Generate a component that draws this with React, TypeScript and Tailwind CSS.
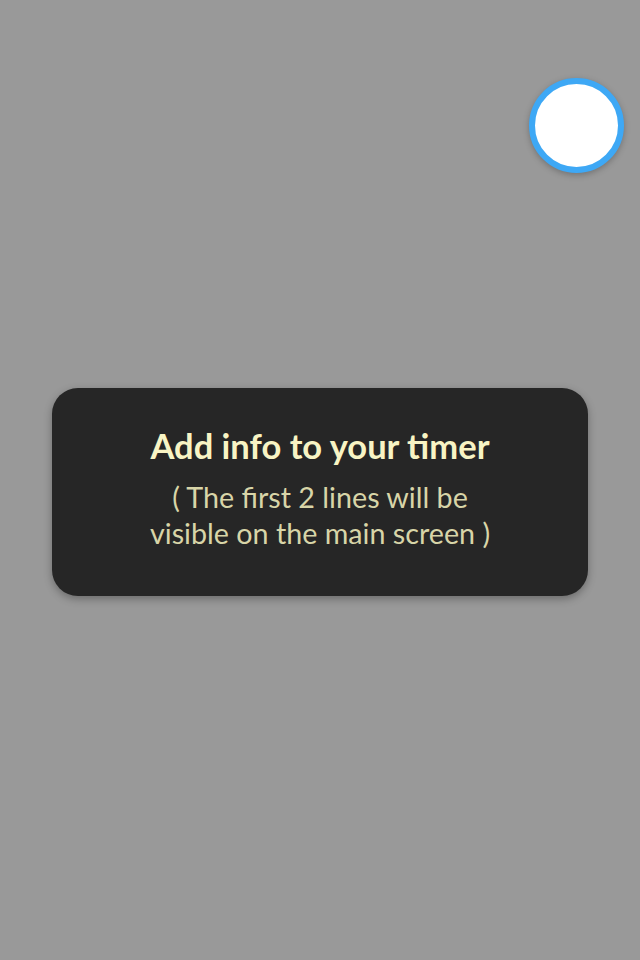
export default function App() {
  return (
    <div className="relative min-h-screen bg-[#999999] px-[52px] pt-[388px]" style={{ fontFamily: '"Source Sans Pro", Lato, "Noto Sans", sans-serif' }}>
      <button className="absolute left-[529px] top-[78px] w-[95px] h-[95px] rounded-full bg-white border-[6px] border-[#3ea8f5] shadow-[0_2px_6px_rgba(0,0,0,0.25)]" />

      <div className="h-[208px] rounded-[26px] bg-[#262626] shadow-[0_3px_8px_rgba(0,0,0,0.3)] pt-[38px] text-center">
        <h2 className="text-[34.5px] leading-[40px] font-bold text-[#f8f4c4]">Add info to your timer</h2>
        <p className="mt-[13px] text-[28.7px] leading-[36px] text-[#d8d5a8]">
          ( The first 2 lines will be
          <br />
          visible on the main screen )
        </p>
      </div>
    </div>
  )
}
